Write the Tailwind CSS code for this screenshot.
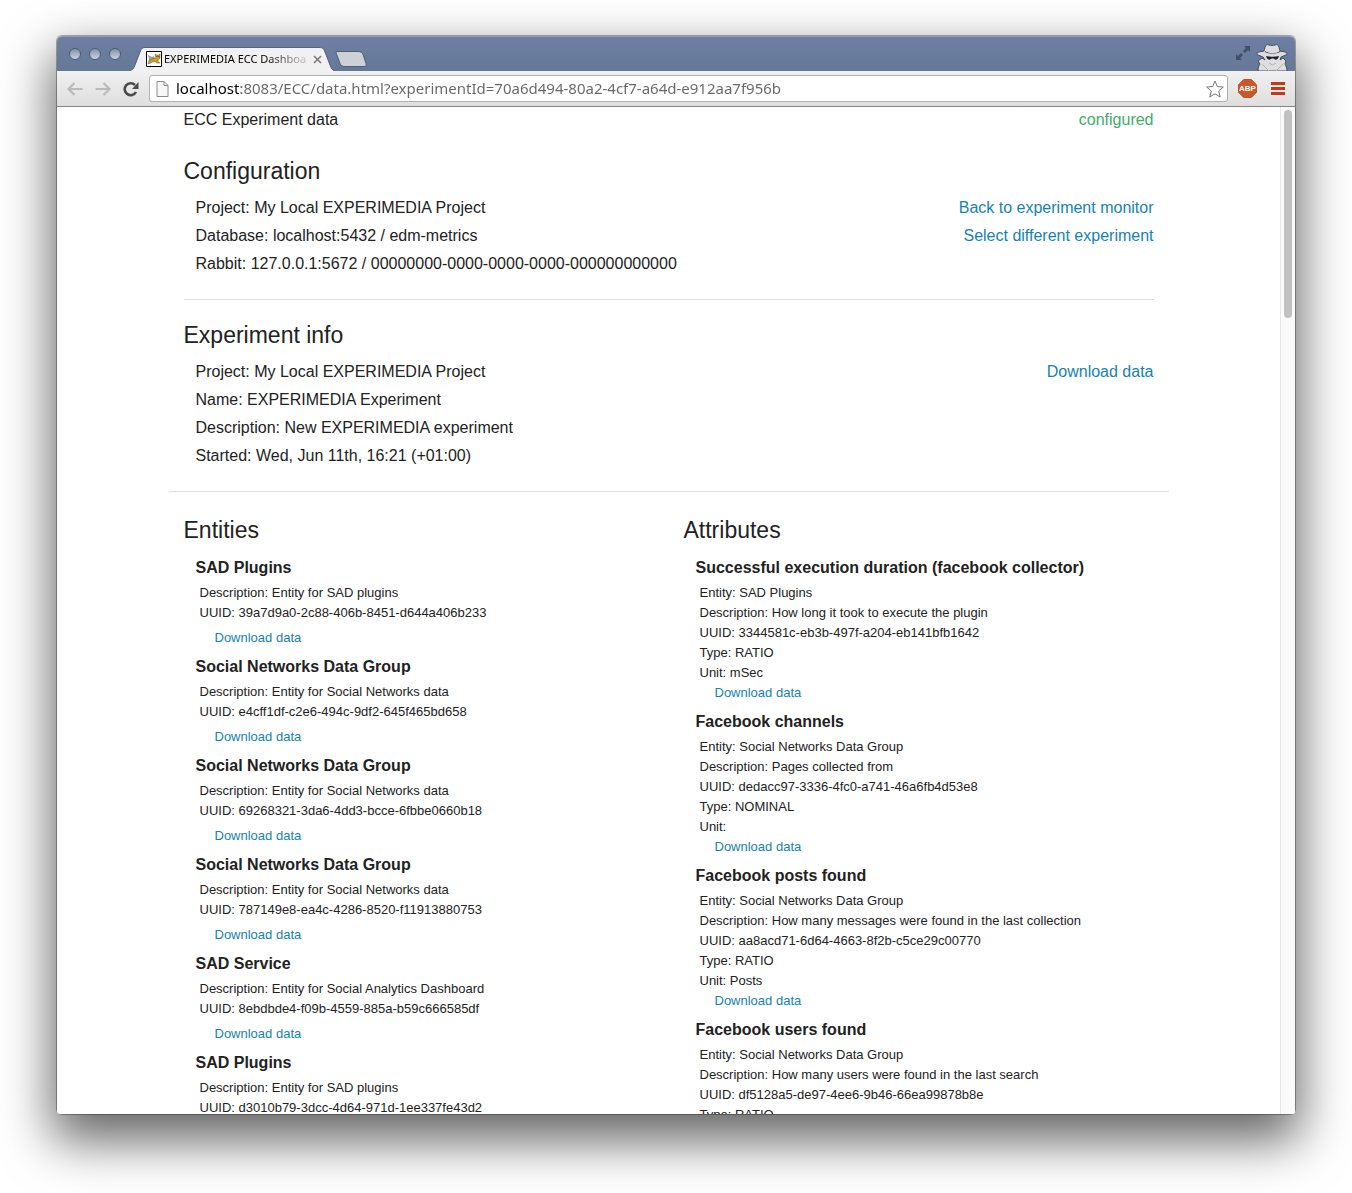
<!DOCTYPE html>
<html lang="en">
<head>
<meta charset="utf-8">
<title>EXPERIMEDIA ECC Dashboard</title>
<script src="https://cdn.jsdelivr.net/npm/@tailwindcss/browser@4"></script>
</head>
<body class="h-screen overflow-hidden bg-white px-[57px] pt-9 pb-[79px] font-['Liberation_Sans',Arial,sans-serif] text-[#222]">
<div class="flex h-full flex-col rounded-[5px] shadow-[0_0_0_1px_rgba(0,0,0,0.3),0_22px_50px_5px_rgba(0,0,0,0.6)]">
  <header class="shrink-0">
    <!-- Title bar with window buttons and tabs -->
    <div class="flex h-[35px] items-end rounded-t-[5px] border-t border-[#8fa0bd] bg-linear-to-b from-[#6d80a2] to-[#667898]">
      <div class="flex gap-2 self-center pl-3">
        <button aria-label="Close" class="size-3 rounded-full border border-[#4d5b75] bg-linear-to-b from-[#8593a8] to-[#c9d4e2]"></button>
        <button aria-label="Minimise" class="size-3 rounded-full border border-[#4d5b75] bg-linear-to-b from-[#8593a8] to-[#c9d4e2]"></button>
        <button aria-label="Zoom" class="size-3 rounded-full border border-[#4d5b75] bg-linear-to-b from-[#8593a8] to-[#c9d4e2]"></button>
      </div>
      <div class="relative ml-2 h-6 w-[206px]">
        <svg class="absolute inset-0" width="206" height="24" viewBox="0 0 206 24"><path d="M0 24C4 23 5 21 6 18L11 5C12 2 13 .5 16 .5H190C194 .5 195 2 196 5L201 18C202 21 203 23 206 24Z" fill="#f1f1f1"/><path d="M0 24C4 23 5 21 6 18L11 5C12 2 13 .5 16 .5H190C194 .5 195 2 196 5L201 18C202 21 203 23 206 24" fill="none" stroke="#52617d"/></svg>
        <div class="relative flex h-full items-center pl-[17px]">
          <svg width="16" height="16" viewBox="0 0 16 16"><path d="M.5.5h15v15H.5z" fill="#fff" stroke="#000"/><path d="M2 4l2 1 2 1 2-1 1 3-3 2-4 2 1-4z" fill="#8fa39b"/><path d="M9 3l1.500 1h2L14 3v4l-1.500 2-1 1 2.500 2h-3l-2-1.500-3 .5-2 1.500H2l2-3 3-2 3-.5z" fill="#cf9f2a" stroke="#6b5522" stroke-width=".5"/><path d="M10.500 5.500h1M12.500 5.500h1" stroke="#332"/></svg>
          <span class="ml-0.5 w-[143px] overflow-hidden bg-linear-to-r from-black from-70% to-black/15 bg-clip-text font-['Noto_Sans',sans-serif] text-[11px] whitespace-nowrap text-transparent">EXPERIMEDIA ECC Dashboard</span>
          <button aria-label="Close tab" class="ml-1.5"><svg width="9" height="9" viewBox="0 0 9 9"><path d="M1 1l7 7M8 1l-7 7" stroke="#777" stroke-width="1.500"/></svg></button>
        </div>
      </div>
      <button aria-label="New tab" class="mb-1"><svg width="32" height="16" viewBox="0 0 32 16"><path d="M2 .5H23c3 0 4 1 5 3l3 9c.5 2 0 3-2 3H10c-3 0-4-1-5-3L1.500 3C.8 1.500 1 .5 2 .5Z" fill="#cdd0d5" stroke="#4d5d7b"/></svg></button>
      <div class="ml-auto flex items-end gap-1 pr-1.5">
        <button aria-label="Full screen" class="mb-2.5"><svg width="16" height="16" viewBox="0 0 16 16"><path d="M9 1h6v6l-2-2-3 3-2-2 3-3zM7 15H1V9l2 2 3-3 2 2-3 3z" fill="#3f4d66"/></svg></button>
        <svg width="34" height="28" viewBox="0 0 34 28">
          <path d="M3 28c0-3 1-6 2-7l-2-3 4-3 3 2-2-3-5-2c-2-1-1-2 1-3l5-1 1-4c1-2 2-3 4-2 2 .6 4 .6 6 0 2-1 3 0 4 2l1 4 5 1c2 1 3 2 1 3l-5 2-1 3 3-2 3 3-1 3c1 2 2 4 2 7Z" fill="#dedede" stroke="#424d60"/>
          <path d="M10 8c4 3 11 3 15 0l.3 1c-5 2.300-10.600 2.300-15.600 0z" fill="#444"/>
          <path d="M11 13c4 1 9 1 13 0l-1 2.500c-1 1.500-3.500 1.500-4.500 0h-2c-1 1.500-3.500 1.500-4.500 0z" fill="#222"/>
          <path d="M7 21l7 7M28 21l-7 7M14 20l3.500 2L21 20" fill="none" stroke="#b5b5b5"/>
        </svg>
      </div>
    </div>
    <!-- Toolbar -->
    <div class="flex h-9 items-center border-b border-[#858585] bg-linear-to-b from-[#f1f1f1] to-[#dedede] px-2.5">
      <button aria-label="Back"><svg width="16" height="14" viewBox="0 0 16 14"><path d="M7.500 1l-6 6 6 6M2 7h13.500" fill="none" stroke="#bababa" stroke-width="2.200"/></svg></button>
      <button aria-label="Forward" class="ml-3"><svg width="16" height="14" viewBox="0 0 16 14"><path d="M8.500 1l6 6-6 6M14 7H.5" fill="none" stroke="#bababa" stroke-width="2.200"/></svg></button>
      <button aria-label="Reload" class="ml-3"><svg width="16" height="16" viewBox="0 0 16 16"><path d="M13 11A6 6 0 1 1 12 4" fill="none" stroke="#4b4b4b" stroke-width="2.600"/><path d="M15.500 1v7H9z" fill="#4b4b4b"/></svg></button>
      <div class="ml-2.5 flex h-[27px] grow items-center rounded-[3px] border border-[#b0b0b0] bg-white pr-[3px] pl-1.5">
        <svg class="shrink-0" width="13" height="16" viewBox="0 0 13 16"><path d="M1 .5h7l4 4v11H1zM8 .5v4h4" fill="#f7f7f7" stroke="#8c8c8c"/></svg>
        <input aria-label="Address" value="localhost:8083/ECC/data.html?experimentId=70a6d494-80a2-4cf7-a64d-e912aa7f956b" class="ml-[7px] min-w-0 grow bg-linear-to-r from-black from-[65px] to-[#666] to-[65px] bg-clip-text font-['Noto_Sans',sans-serif] text-[15px] text-transparent outline-none">
        <button aria-label="Bookmark" class="shrink-0"><svg width="18" height="18" viewBox="0 0 18 18"><path d="M9 1l2.300 5.500 6 .5-4.600 4 1.500 6L9 13.800 3.800 17l1.500-6L.7 7l6-.5z" fill="#fff" stroke="#777"/></svg></button>
      </div>
      <button aria-label="Adblock Plus" class="relative ml-2.5 flex size-[19px] items-center justify-center">
        <svg class="absolute inset-0" width="19" height="19" viewBox="0 0 19 19"><path d="M5.700.5h7.600l5.200 5.200v7.600l-5.200 5.200H5.700L.5 13.300V5.700z" fill="#c9582a" stroke="#b4552f"/></svg>
        <span class="relative text-[8px] font-bold text-white">ABP</span>
      </button>
      <button aria-label="Menu" class="ml-3.5 flex w-3.5 flex-col gap-0.5">
        <span class="h-[3px] w-full bg-[#c13a1c]"></span><span class="h-[3px] w-full bg-[#c13a1c]"></span><span class="h-[3px] w-full bg-[#c13a1c]"></span>
      </button>
    </div>
  </header>

  <div class="flex min-h-0 grow overflow-hidden rounded-b-[3px] bg-white">
    <main class="min-w-0 grow overflow-hidden">
      <div class="mx-auto max-w-[1000px]">
        <div class="px-[15px]">
          <div class="flex justify-between pt-px leading-6"><p>ECC Experiment data</p><p class="text-[#43ac6a]">configured</p></div>

          <section class="mt-[23px] border-b border-[#ddd] pb-[21px]">
            <h2 class="text-[23px] leading-8">Configuration</h2>
            <div class="mt-[7px] flex justify-between pl-3 leading-7">
              <div>
                <p>Project: My Local EXPERIMEDIA Project</p>
                <p>Database: localhost:5432 / edm-metrics</p>
                <p>Rabbit: 127.0.0.1:5672 / 00000000-0000-0000-0000-000000000000</p>
              </div>
              <div class="flex flex-col items-end text-[#1583b0]">
                <a href="#">Back to experiment monitor</a>
                <a href="#">Select different experiment</a>
              </div>
            </div>
          </section>
        </div>

        <section class="border-b border-[#ddd] px-[15px] pt-[19px] pb-[21px]">
          <h2 class="text-[23px] leading-8">Experiment info</h2>
          <div class="mt-[7px] flex justify-between pl-3 leading-7">
            <div>
              <p>Project: My Local EXPERIMEDIA Project</p>
              <p>Name: EXPERIMEDIA Experiment</p>
              <p>Description: New EXPERIMEDIA experiment</p>
              <p>Started: Wed, Jun 11th, 16:21 (+01:00)</p>
            </div>
            <a href="#" class="text-[#1583b0]">Download data</a>
          </div>
        </section>

        <div class="grid grid-cols-2 pt-[22px] text-[13px] leading-5">
          <section class="px-[15px]">
            <h2 class="text-[23px] leading-8">Entities</h2>
            <div class="mt-2.5 flex flex-col gap-[7px] pl-3">
              <article>
                <h3 class="mb-[3px] text-base leading-6 font-bold">SAD Plugins</h3>
                <div class="pl-1"><p>Description: Entity for SAD plugins</p><p>UUID: 39a7d9a0-2c88-406b-8451-d644a406b233</p></div>
                <a href="#" class="mt-[5px] ml-[19px] block text-[#1583b0]">Download data</a>
              </article>
              <article>
                <h3 class="mb-[3px] text-base leading-6 font-bold">Social Networks Data Group</h3>
                <div class="pl-1"><p>Description: Entity for Social Networks data</p><p>UUID: e4cff1df-c2e6-494c-9df2-645f465bd658</p></div>
                <a href="#" class="mt-[5px] ml-[19px] block text-[#1583b0]">Download data</a>
              </article>
              <article>
                <h3 class="mb-[3px] text-base leading-6 font-bold">Social Networks Data Group</h3>
                <div class="pl-1"><p>Description: Entity for Social Networks data</p><p>UUID: 69268321-3da6-4dd3-bcce-6fbbe0660b18</p></div>
                <a href="#" class="mt-[5px] ml-[19px] block text-[#1583b0]">Download data</a>
              </article>
              <article>
                <h3 class="mb-[3px] text-base leading-6 font-bold">Social Networks Data Group</h3>
                <div class="pl-1"><p>Description: Entity for Social Networks data</p><p>UUID: 787149e8-ea4c-4286-8520-f11913880753</p></div>
                <a href="#" class="mt-[5px] ml-[19px] block text-[#1583b0]">Download data</a>
              </article>
              <article>
                <h3 class="mb-[3px] text-base leading-6 font-bold">SAD Service</h3>
                <div class="pl-1"><p>Description: Entity for Social Analytics Dashboard</p><p>UUID: 8ebdbde4-f09b-4559-885a-b59c666585df</p></div>
                <a href="#" class="mt-[5px] ml-[19px] block text-[#1583b0]">Download data</a>
              </article>
              <article>
                <h3 class="mb-[3px] text-base leading-6 font-bold">SAD Plugins</h3>
                <div class="pl-1"><p>Description: Entity for SAD plugins</p><p>UUID: d3010b79-3dcc-4d64-971d-1ee337fe43d2</p></div>
              </article>
            </div>
          </section>

          <section class="px-[15px]">
            <h2 class="text-[23px] leading-8">Attributes</h2>
            <div class="mt-2.5 flex flex-col gap-[7px] pl-3">
              <article>
                <h3 class="mb-[3px] text-base leading-6 font-bold">Successful execution duration (facebook collector)</h3>
                <div class="pl-1"><p>Entity: SAD Plugins</p><p>Description: How long it took to execute the plugin</p><p>UUID: 3344581c-eb3b-497f-a204-eb141bfb1642</p><p>Type: RATIO</p><p>Unit: mSec</p></div>
                <a href="#" class="ml-[19px] block text-[#1583b0]">Download data</a>
              </article>
              <article>
                <h3 class="mb-[3px] text-base leading-6 font-bold">Facebook channels</h3>
                <div class="pl-1"><p>Entity: Social Networks Data Group</p><p>Description: Pages collected from</p><p>UUID: dedacc97-3336-4fc0-a741-46a6fb4d53e8</p><p>Type: NOMINAL</p><p>Unit:</p></div>
                <a href="#" class="ml-[19px] block text-[#1583b0]">Download data</a>
              </article>
              <article>
                <h3 class="mb-[3px] text-base leading-6 font-bold">Facebook posts found</h3>
                <div class="pl-1"><p>Entity: Social Networks Data Group</p><p>Description: How many messages were found in the last collection</p><p>UUID: aa8acd71-6d64-4663-8f2b-c5ce29c00770</p><p>Type: RATIO</p><p>Unit: Posts</p></div>
                <a href="#" class="ml-[19px] block text-[#1583b0]">Download data</a>
              </article>
              <article>
                <h3 class="mb-[3px] text-base leading-6 font-bold">Facebook users found</h3>
                <div class="pl-1"><p>Entity: Social Networks Data Group</p><p>Description: How many users were found in the last search</p><p>UUID: df5128a5-de97-4ee6-9b46-66ea99878b8e</p><p>Type: RATIO</p></div>
              </article>
            </div>
          </section>
        </div>
      </div>
    </main>
    <!-- Scrollbar -->
    <div class="w-[15px] shrink-0 border-l border-[#e7e7e7] bg-[#fafafa] px-[3px] pt-[3px]">
      <div class="h-52 w-2 rounded-full bg-[#c1c1c1]"></div>
    </div>
  </div>
</div>
</body>
</html>
